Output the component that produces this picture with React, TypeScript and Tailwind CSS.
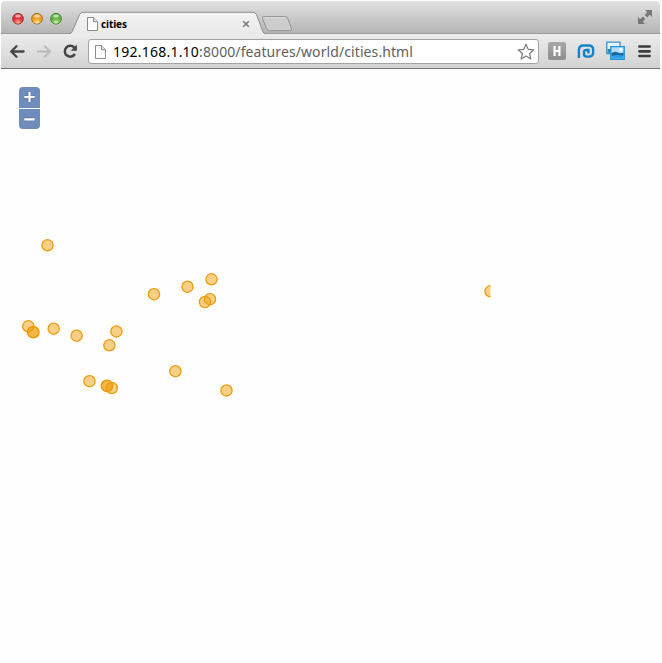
import React from 'react';

const lights = [
  { id: 'close', rim: '#8e2b2c', base: '#e0343a', glow: '#ffb4a4' },
  { id: 'minimise', rim: '#94601c', base: '#eba125', glow: '#ffeaa0' },
  { id: 'zoom', rim: '#3f7428', base: '#62b446', glow: '#d8f7b4' },
];

const cities: [number, number][] = [
  [47.5, 245.3], [211.5, 279.3], [187.5, 286.7], [154, 294.2], [210, 299.2],
  [205, 302], [28.3, 326.3], [33, 332], [33.4, 332.3], [53.7, 328.7],
  [76.6, 335.7], [116.4, 331.4], [109.4, 345.3], [175.4, 371.2], [89.5, 381.2],
  [106.8, 385.7], [107.1, 386], [111.8, 388], [226.5, 390.4],
];

function TrafficLight({ id, rim, base, glow }: { id: string; rim: string; base: string; glow: string }) {
  return (
    <svg width="13" height="13" viewBox="0 0 13 13" className="block">
      <defs>
        <radialGradient id={id} cx=".5" cy=".88" r=".65">
          <stop offset="0" stopColor={glow} />
          <stop offset=".65" stopColor={base} />
          <stop offset="1" stopColor={base} />
        </radialGradient>
      </defs>
      <circle cx="6" cy="7.2" r="5.7" fill="#fff" opacity=".5" />
      <circle cx="6" cy="6.8" r="5.4" fill={`url(#${id})`} stroke={rim} strokeWidth=".9" />
      <ellipse cx="6" cy="4" rx="2.8" ry="1.6" fill="#fff" opacity=".6" />
    </svg>
  );
}

function PageIcon({ className = '' }: { className?: string }) {
  return (
    <svg width="11" height="14" viewBox="0 0 11 14" className={`block shrink-0 ${className}`}>
      <path d="M.5.5H6.5L10.5 4.7V13.5H.5Z" fill="#fbfbfb" stroke="#8b8b8b" />
      <path d="M6.5.5V4.7H10.5" fill="#e6e6e6" stroke="#8b8b8b" />
    </svg>
  );
}

function TabStrip() {
  return (
    <div className="relative flex h-[33px] items-start bg-gradient-to-b from-[#e2e2e2] to-[#b3b3b3]">
      <svg width="659" height="34" className="absolute inset-0" fill="none">
        <defs>
          <linearGradient id="tab" x2="0" y2="1">
            <stop stopColor="#f3f3f3" />
            <stop offset="1" stopColor="#e9e9e9" />
          </linearGradient>
        </defs>
        <path d="M0 32.9H68Q70.3 32.9 71.3 30.5L78.6 13.5Q79.6 11.3 82 11.3H252Q254.5 11.3 255.5 13.5L261.8 30.5Q262.8 32.9 265 32.9H659V34H0Z" fill="url(#tab)" />
        <path d="M0 32.9H68Q70.3 32.9 71.3 30.5L78.6 13.5Q79.6 11.3 82 11.3H252Q254.5 11.3 255.5 13.5L261.8 30.5Q262.8 32.9 265 32.9H659" stroke="#8c8c8c" />
        <path d="M262.8 15.6H284.2Q286 15.6 286.7 17.3L290.4 27.3Q291.2 29.6 288.7 29.6H268.3Q266.3 29.6 265.5 27.6L261.5 17.5Q260.8 15.6 262.8 15.6Z" fill="#cdcdcd" stroke="#929292" />
        <path d="M264 16.6H284" stroke="#dedede" />
      </svg>
      <div className="relative ml-[11px] mt-[11px] flex gap-[6px]">
        {lights.map((light) => <TrafficLight key={light.id} {...light} />)}
      </div>
      <div className="relative ml-[24px] mt-[16px] flex w-[163px] items-center">
        <PageIcon />
        <span className="ml-[3px] font-['Open_Sans',sans-serif] text-[10px] font-bold leading-[13px] tracking-[-0.12px] text-black">cities</span>
        <svg width="8" height="8" className="ml-auto block" viewBox="0 0 8 8">
          <path d="M1.2 1.2L6.8 6.8M6.8 1.2L1.2 6.8" stroke="#777" strokeWidth="1.5" />
        </svg>
      </div>
      <svg width="14" height="14" viewBox="0 0 14 14" className="relative ml-auto mr-[8px] mt-[9px] block" fill="#777">
        <path d="M7 0H14V7L11.8 4.8L9 7.4L6.7 5.1L9.3 2.3ZM0 7L2.2 9.2L5 6.6L7.3 8.9L4.7 11.7L7 14H0Z" />
        <path d="M5.4 5.3L8.8 8.7" stroke="#cecece" strokeWidth="1.5" />
      </svg>
    </div>
  );
}

function Toolbar() {
  return (
    <div className="relative flex h-[35px] items-start border-b border-[#747474] bg-gradient-to-b from-[#ececec] to-[#d2d2d2]">
      <svg width="70" height="18" viewBox="0 0 70 18" className="ml-[8px] mt-[8px] block" fill="none" strokeLinecap="round" strokeLinejoin="round">
        <path d="M7.5 4.2L2.2 9.5L7.5 14.8M2.7 9.5H14.6" stroke="#454545" strokeWidth="2.3" />
        <path d="M35.7 4.2L41 9.5L35.7 14.8M40.5 9.5H28.8" stroke="#bababa" strokeWidth="1.9" />
        <path d="M65.3 5.7A5.4 5.4 0 1 0 65.9 12" stroke="#454545" strokeWidth="2.5" strokeLinecap="butt" />
        <path d="M67.9 2.6V8.8H61.7Z" fill="#454545" />
      </svg>
      <div className="ml-[9px] mt-[5px] flex h-[25px] w-[451px] items-center rounded-[3px] border border-[#a3a3a3] bg-white pl-[6px] pr-[3px]">
        <PageIcon />
        <div className="ml-[7px] whitespace-nowrap font-['Noto_Sans',sans-serif] text-[14px] leading-[20px] tracking-[0.09px] text-[#606060]">
          <span className="tracking-[0.23px] text-black">192.168.1.10</span>:8000/features/world/cities.html
        </div>
        <svg width="18" height="18" viewBox="0 0 18 18" className="ml-auto block" fill="#fff" stroke="#7a7a7a" strokeWidth="1.2" strokeLinejoin="round">
          <path d="M9 1.2L11.2 6.3L16.8 6.8L12.6 10.5L13.8 16L9 13.1L4.2 16L5.4 10.5L1.2 6.8L6.8 6.3Z" />
        </svg>
      </div>
      <div className="ml-[9px] mt-[8px] flex h-[18px] w-[18px] items-center justify-center rounded-[2px] bg-gradient-to-b from-[#a8a8a8] to-[#8e8e8e]">
        <svg width="8" height="10" viewBox="0 0 8 10" className="block" fill="#fff">
          <path d="M.5 0H2.7V3.9H5.3V0H7.5V10H5.3V6H2.7V10H.5Z" />
        </svg>
      </div>
      <svg width="18" height="15" viewBox="0 0 18 15" className="ml-[11px] mt-[10px] block" fill="none" stroke="#1283c8" strokeWidth="2.4">
        <path d="M1.9 14V6Q1.9 1.5 6.4 1.5H11.6Q16.2 1.5 16.2 6V8.2Q16.2 12.6 11.6 12.6H9.6Q7 12.6 7 10V8.3Q7 6 9.3 6H11.4V9.4" />
      </svg>
      <svg width="19" height="19" viewBox="0 0 19 19" className="ml-[11px] mt-[7px] block">
        <path d="M.8 1.2H14V12.5H.8Z" fill="#e6f4fc" stroke="#3c8fc2" strokeWidth="1.3" />
        <path d="M1.6 8H5V11.8H1.6Z" fill="#2784ba" />
        <path d="M4.8 5.6H18.2V18.2H4.8Z" fill="#b5def8" stroke="#1c93dc" strokeWidth="1.4" />
        <path d="M5.5 12.2Q8.5 9.6 11.5 11.3Q14.5 13 17.5 11.5V15.3H5.5Z" fill="#15689c" />
        <path d="M5.5 14.8Q11.5 13.4 17.5 14.8V17.5H5.5Z" fill="#2ba0ea" />
        <circle cx="14.8" cy="8.6" r="1.5" fill="#fff" />
      </svg>
      <svg width="13" height="13" viewBox="0 0 13 13" className="ml-[13px] mt-[11px] block">
        <path d="M1.4 1.5H11.6M1.4 6.3H11.6M1.4 11H11.6" stroke="#3d3d3d" strokeWidth="2.7" strokeLinecap="round" />
      </svg>
    </div>
  );
}

function ZoomControl() {
  return (
    <div className="ml-[18px] mt-[18px] flex w-[21px] flex-col gap-px">
      {['M10.5 5V15M5.3 10H15.7', 'M5.3 10.3H15.7'].map((path, i) => (
        <button key={path} aria-label={i === 0 ? 'Zoom in' : 'Zoom out'} className={`${i === 0 ? 'h-[21px] rounded-t-[4px]' : 'h-[20px] rounded-b-[4px]'} block w-[21px] overflow-hidden bg-[#6f8dbc]`}>
          <svg width="21" height="21" className="block" fill="none">
            <path d={path} stroke="#526b97" strokeWidth="4" opacity=".5" />
            <path d={path} stroke="#fff" strokeWidth="2.2" />
          </svg>
        </button>
      ))}
    </div>
  );
}

export default function App() {
  return (
    <main className="relative h-[663px] w-[662px] overflow-hidden bg-[#fefefe] px-px pt-px">
      <header className="w-[659px] overflow-hidden rounded-t-[4px]">
        <TabStrip />
        <Toolbar />
      </header>
      <ZoomControl />
      <svg width="662" height="663" className="pointer-events-none absolute inset-0">
        <defs><clipPath id="map-edge"><path d="M18 86H490.5V663H18Z" /></clipPath></defs>
        <g fill="#f0a010" fillOpacity=".5" stroke="#eb9c0c" strokeWidth="1.3">
          {cities.map(([x, y], i) => <circle key={i} cx={x} cy={y} r="5.6" />)}
          <circle cx="490.5" cy="291.3" r="5.6" clipPath="url(#map-edge)" />
        </g>
      </svg>
    </main>
  );
}
